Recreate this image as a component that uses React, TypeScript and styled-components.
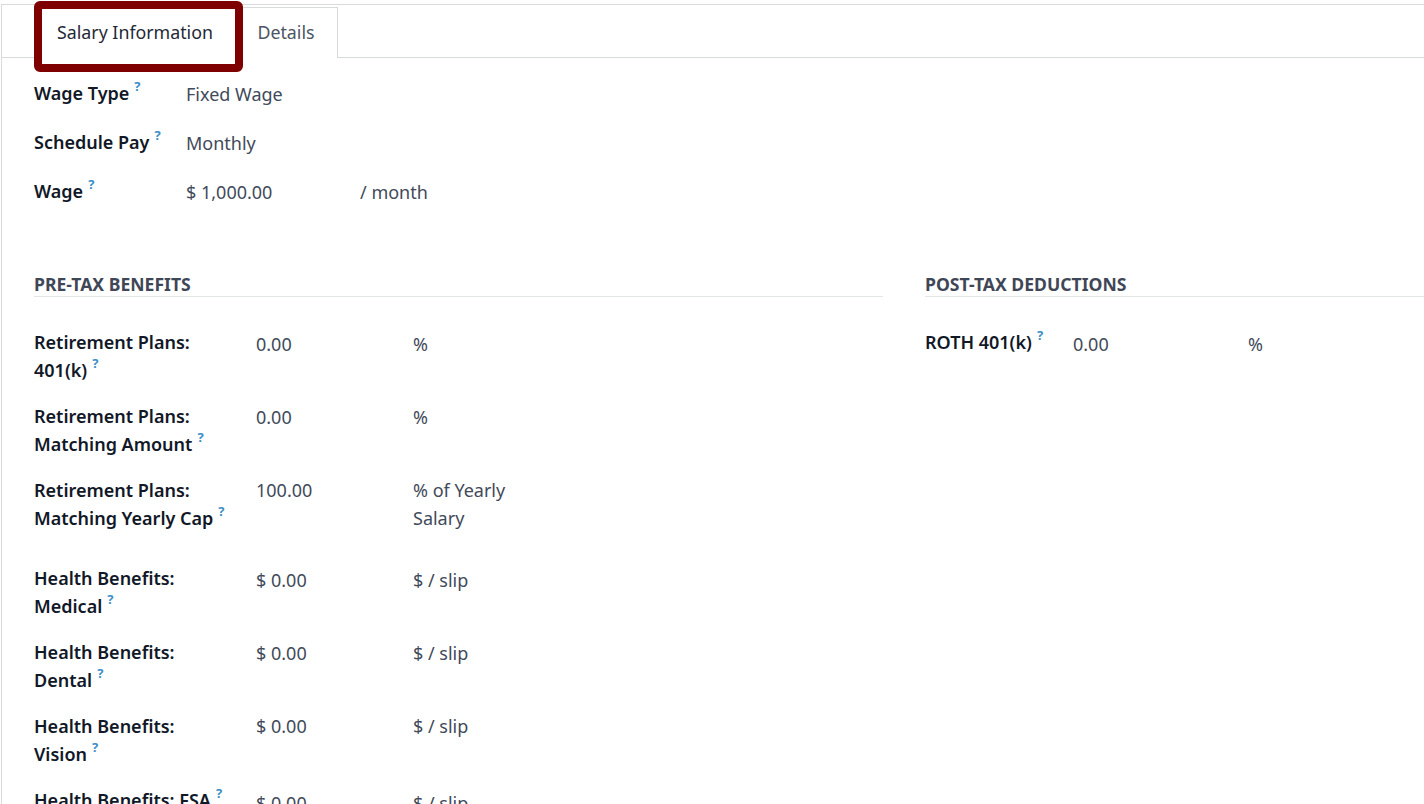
import React from 'react';
import styled, { createGlobalStyle } from 'styled-components';

const GlobalStyle = createGlobalStyle`
  html, body {
    margin: 0;
    height: 804px;
    overflow: hidden;
    background: #fff;
  }
  body {
    font-family: "Noto Sans", "Open Sans", sans-serif;
    font-size: 18px;
    color: #3f4a5a;
  }
`;

const Sheet = styled.div`
  display: flex;
  flex-direction: column;
  margin: 4px 0 0 1px;
  height: 800px;
  border-top: 1px solid #d8dadd;
  border-left: 1px solid #d8dadd;
  box-sizing: border-box;
`;

const TabBar = styled.div`
  display: flex;
  flex: none;
  height: 53px;
  box-sizing: border-box;
  padding: 2px 0 0 34px;
  border-bottom: 1px solid #d8dadd;
`;

const Tab = styled.div<{ $active?: boolean }>`
  position: relative;
  z-index: ${(p) => (p.$active ? 1 : 0)};
  display: flex;
  align-items: center;
  justify-content: center;
  box-sizing: border-box;
  height: 51px;
  padding: 0 ${(p) => (p.$active ? '3px' : '2px')} 2px 0;
  font-size: 17.8px;
  color: ${(p) => (p.$active ? '#1f2937' : '#4b5563')};
  background: #fff;
  width: ${(p) => (p.$active ? '201px' : '101px')};
  border: 1px solid #d8dadd;
  border-left-width: ${(p) => (p.$active ? '1px' : '0')};
  border-bottom: 0;
`;

const Highlight = styled.span`
  position: absolute;
  left: -3px;
  top: -7px;
  width: 209px;
  height: 71px;
  box-sizing: border-box;
  border: 8px solid #7e0000;
  border-radius: 6px;
`;

const Body = styled.div`
  flex: 1;
  min-height: 0;
  overflow: hidden;
  padding: 21px 0 0 32px;
`;

const TopRow = styled.div`
  display: grid;
  grid-template-columns: 152px 174px auto;
  height: 49px;
  line-height: 28px;
`;

const TopValue = styled.div`
  padding-top: 1px;
`;

const Label = styled.div`
  color: #111827;
  font-weight: 600;
  line-height: 28px;
`;

const Help = styled.sup`
  color: #3b8dc8;
  font-size: 13px;
  font-weight: 700;
  margin-left: 5px;
  line-height: 0;
  vertical-align: 9px;
`;

const Columns = styled.div`
  display: grid;
  grid-template-columns: 849px 1fr;
  column-gap: 42px;
  margin-top: 45px;
`;

const SectionTitle = styled.div`
  color: #3f4757;
  font-size: 17.6px;
  font-weight: 700;
  line-height: 26px;
  height: 25px;
  border-bottom: 1px solid #e3e5e8;
  margin-bottom: 31px;
`;

const BenefitRow = styled.div<{ $tall?: boolean }>`
  display: grid;
  grid-template-columns: 222px 157px 110px;
  height: ${(p) => (p.$tall ? '88px' : '74px')};
`;

const RothRow = styled.div`
  display: grid;
  grid-template-columns: 148px 175px auto;
  width: 420px;
`;

const Cell = styled.div<{ $drop?: number }>`
  line-height: 28px;
  padding-top: ${(p) => p.$drop ?? 2}px;
`;

const Field = ({ children }: { children: React.ReactNode }) => (
  <Label>
    {children}
    <Help>?</Help>
  </Label>
);

const benefits = [
  { first: 'Retirement Plans:', second: '401(k)', value: '0.00', unit: '%', drop: 2 },
  { first: 'Retirement Plans:', second: 'Matching Amount', value: '0.00', unit: '%', drop: 1 },
  { first: 'Retirement Plans:', second: 'Matching Yearly Cap', value: '100.00', unit: '% of Yearly Salary', tall: true, drop: 0 },
  { first: 'Health Benefits:', second: 'Medical', value: '$ 0.00', unit: '$ / slip', drop: 2 },
  { first: 'Health Benefits:', second: 'Dental', value: '$ 0.00', unit: '$ / slip', drop: 1 },
  { first: 'Health Benefits:', second: 'Vision', value: '$ 0.00', unit: '$ / slip', drop: 0 },
  { first: 'Health Benefits: FSA', value: '$ 0.00', unit: '$ / slip', drop: 3 },
];

export default function App() {
  return (
    <>
      <GlobalStyle />
      <Sheet>
        <TabBar>
          <Tab $active>
            Salary Information
            <Highlight />
          </Tab>
          <Tab>Details</Tab>
        </TabBar>
        <Body>
          <TopRow>
            <Field>Wage Type</Field>
            <TopValue>Fixed Wage</TopValue>
          </TopRow>
          <TopRow>
            <Field>Schedule Pay</Field>
            <TopValue>Monthly</TopValue>
          </TopRow>
          <TopRow>
            <Field>Wage</Field>
            <TopValue>$ 1,000.00</TopValue>
            <TopValue>/ month</TopValue>
          </TopRow>
          <Columns>
            <div>
              <SectionTitle>PRE-TAX BENEFITS</SectionTitle>
              {benefits.map((b) => (
                <BenefitRow key={b.first + b.second} $tall={b.tall}>
                  <Field>
                    {b.first}
                    {b.second && <br />}
                    {b.second}
                  </Field>
                  <Cell $drop={b.drop}>{b.value}</Cell>
                  <Cell $drop={b.drop}>{b.unit}</Cell>
                </BenefitRow>
              ))}
            </div>
            <div>
              <SectionTitle>POST-TAX DEDUCTIONS</SectionTitle>
              <RothRow>
                <Field>ROTH 401(k)</Field>
                <Cell>0.00</Cell>
                <Cell>%</Cell>
              </RothRow>
            </div>
          </Columns>
        </Body>
      </Sheet>
    </>
  );
}
